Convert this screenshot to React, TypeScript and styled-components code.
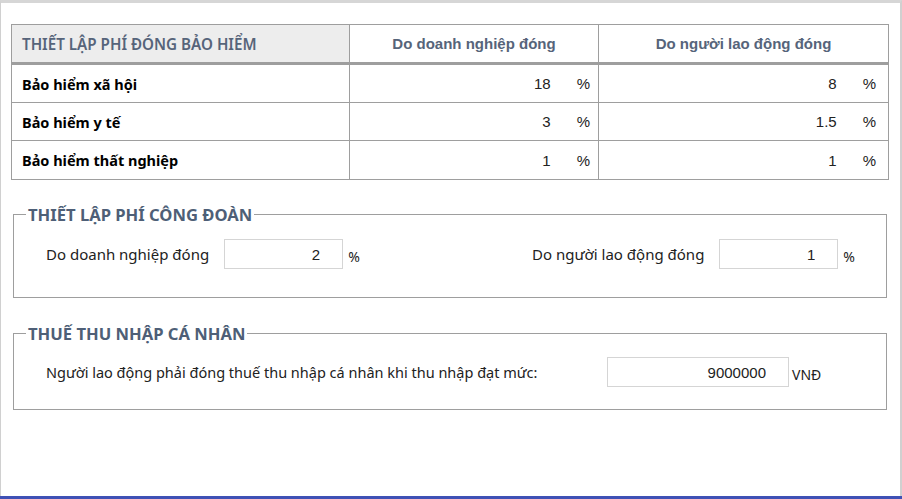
import React from "react";
import styled, { createGlobalStyle } from "styled-components";

const GlobalStyle = createGlobalStyle`
  html, body { margin: 0; padding: 0; background: #ffffff; }
  * { box-sizing: border-box; }
`;

const Frame = styled.div`
  width: 902px;
  height: 499px;
  display: flex;
  flex-direction: column;
  font-family: "Noto Sans", "Open Sans", sans-serif;
`;

const Panel = styled.div`
  flex: 1;
  border-top: 3px solid #d6d6d6;
  border-left: 1px solid #d0d0d0;
  border-right: 2px solid #d0d0d0;
  padding: 21px 11px 0 10px;
`;

const BottomBar = styled.div`
  height: 3px;
  background: #3f51b5;
`;

const Grid = styled.div`
  display: grid;
  grid-template-columns: 338px 249px 289px;
  border: 1px solid #9e9e9e;
`;

const HeadCell = styled.div<{ $first?: boolean; $last?: boolean }>`
  height: 40px;
  display: flex;
  align-items: center;
  justify-content: ${(p) => (p.$first ? "flex-start" : "center")};
  padding-left: ${(p) => (p.$first ? "10px" : "0")};
  background: ${(p) => (p.$first ? "#ededed" : "#ffffff")};
  border-bottom: 3px solid #9e9e9e;
  border-right: ${(p) => (p.$last ? "none" : "1px solid #9e9e9e")};
  color: #56647a;
  font-family: ${(p) =>
    p.$first ? `"Noto Sans", sans-serif` : `"Liberation Sans", Arial, sans-serif`};
  font-weight: ${(p) => (p.$first ? 600 : 700)};
  font-size: ${(p) => (p.$first ? "15.2px" : "15px")};
`;

const Cell = styled.div<{ $label?: boolean; $last?: boolean; $lastRow?: boolean; $pr?: number }>`
  height: 38px;
  display: flex;
  align-items: center;
  justify-content: ${(p) => (p.$label ? "flex-start" : "flex-end")};
  padding-left: ${(p) => (p.$label ? "10px" : "0")};
  padding-right: ${(p) => p.$pr ?? 0}px;
  border-right: ${(p) => (p.$last ? "none" : "1px solid #9e9e9e")};
  border-bottom: ${(p) => (p.$lastRow ? "none" : "1px solid #9e9e9e")};
  font-weight: ${(p) => (p.$label ? 700 : 400)};
  font-size: 14.5px;
  color: ${(p) => (p.$label ? "#000000" : "#222222")};
`;

const Num = styled.span`
  font-family: "Liberation Sans", Arial, sans-serif;
  font-size: 15px;
  color: #222;
`;

const Pct = styled.span`
  font-family: "Liberation Sans", Arial, sans-serif;
  font-size: 15px;
  color: #222;
  margin-left: 26px;
`;

const Fieldset = styled.fieldset<{ $h: number; $mt: number }>`
  margin: ${(p) => p.$mt}px 2px 0;
  padding: 0 12px;
  border: 1px solid #9e9e9e;
  height: ${(p) => p.$h}px;
`;

const Legend = styled.legend`
  padding: 0 2px;
  font-family: "Noto Sans", sans-serif;
  font-weight: 700;
  font-size: 16.6px;
  line-height: 23px;
  color: #4e5f77;
`;

const Row = styled.div<{ $top: number }>`
  display: flex;
  align-items: center;
  justify-content: space-between;
  margin-top: ${(p) => p.$top}px;
  padding: 0 19px 0 20px;
`;

const Group = styled.div`
  display: flex;
  align-items: center;
`;

const Label = styled.span<{ $w?: number; $size?: number }>`
  font-family: "Noto Sans", sans-serif;
  font-size: ${(p) => p.$size ?? 15}px;
  color: #222;
  width: ${(p) => (p.$w ? `${p.$w}px` : "auto")};
  margin-right: ${(p) => (p.$w ? "0" : "15px")};
`;

const Input = styled.input<{ $w: number }>`
  width: ${(p) => p.$w}px;
  height: 30px;
  border: 1px solid #d5d5d5;
  padding: 0 22px 0 4px;
  text-align: right;
  font-family: "Liberation Sans", Arial, sans-serif;
  font-size: 15px;
  color: #222;
  outline: none;
`;

const Unit = styled.span<{ $ml?: number }>`
  font-family: "Noto Sans", sans-serif;
  font-size: 14px;
  color: #222;
  margin-left: ${(p) => p.$ml ?? 5}px;
  margin-top: 4px;
`;

const rows = [
  { label: "Bảo hiểm xã hội", a: "18", b: "8" },
  { label: "Bảo hiểm y tế", a: "3", b: "1.5" },
  { label: "Bảo hiểm thất nghiệp", a: "1", b: "1" },
];

export default function App() {
  return (
    <>
      <GlobalStyle />
      <Frame>
        <Panel>
          <Grid>
            <HeadCell $first>THIẾT LẬP PHÍ ĐÓNG BẢO HIỂM</HeadCell>
            <HeadCell>Do doanh nghiệp đóng</HeadCell>
            <HeadCell $last>Do người lao động đóng</HeadCell>
            {rows.map((r, i) => {
              const lastRow = i === rows.length - 1;
              return (
                <React.Fragment key={r.label}>
                  <Cell $label $lastRow={lastRow}>{r.label}</Cell>
                  <Cell $lastRow={lastRow} $pr={8}>
                    <Num>{r.a}</Num>
                    <Pct>%</Pct>
                  </Cell>
                  <Cell $last $lastRow={lastRow} $pr={12}>
                    <Num>{r.b}</Num>
                    <Pct>%</Pct>
                  </Cell>
                </React.Fragment>
              );
            })}
          </Grid>

          <Fieldset $h={95} $mt={23}>
            <Legend>THIẾT LẬP PHÍ CÔNG ĐOÀN</Legend>
            <Row $top={13}>
              <Group>
                <Label>Do doanh nghiệp đóng</Label>
                <Input $w={119} defaultValue="2" />
                <Unit>%</Unit>
              </Group>
              <Group>
                <Label>Do người lao động đóng</Label>
                <Input $w={119} defaultValue="1" />
                <Unit>%</Unit>
              </Group>
            </Row>
          </Fieldset>

          <Fieldset $h={88} $mt={24}>
            <Legend>THUẾ THU NHẬP CÁ NHÂN</Legend>
            <Row $top={12}>
              <Group>
                <Label $w={561} $size={14.5}>
                  Người lao động phải đóng thuế thu nhập cá nhân khi thu nhập đạt mức:
                </Label>
                <Input $w={182} defaultValue="9000000" />
                <Unit $ml={3}>VNĐ</Unit>
              </Group>
            </Row>
          </Fieldset>
        </Panel>
        <BottomBar />
      </Frame>
    </>
  );
}
